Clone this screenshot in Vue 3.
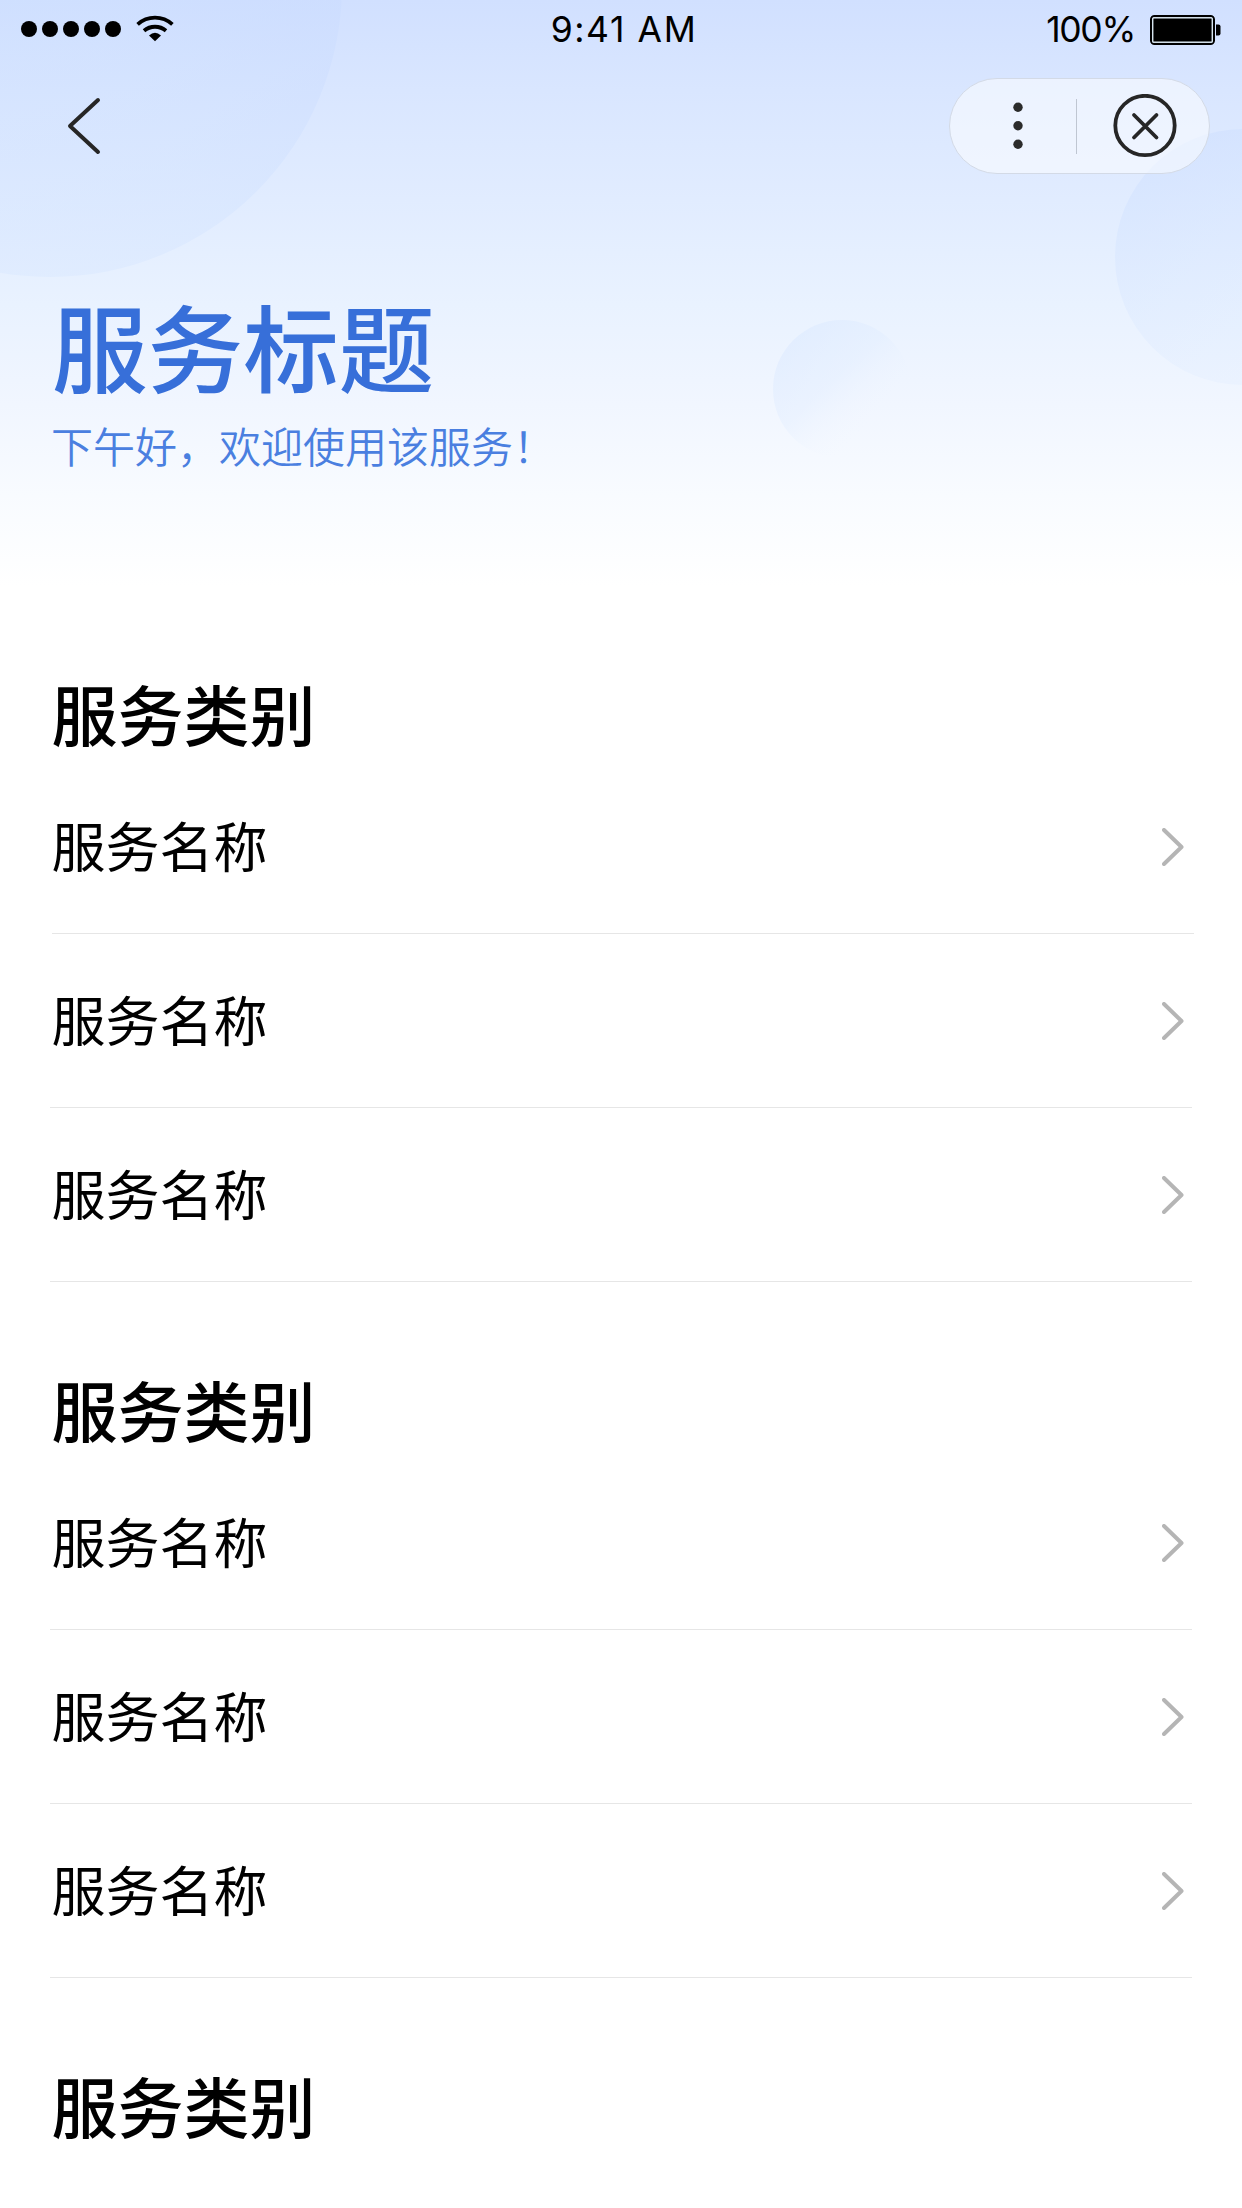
<script setup>
const sections = Array.from({ length: 3 }, (_, id) => ({
  id,
  title: '服务类别',
  items: id < 2 ? ['服务名称', '服务名称', '服务名称'] : [],
}))
</script>

<template>
  <div class="page">
    <header class="hero">
      <svg class="bubbles" viewBox="0 0 1242 600" aria-hidden="true">
        <defs>
          <linearGradient id="b1" x1="0.95" y1="0.6" x2="0.45" y2="0.95">
            <stop offset="0" stop-color="#c6d9ff" stop-opacity="0.32" />
            <stop offset="0.5" stop-color="#cadeff" stop-opacity="0.28" />
            <stop offset="1" stop-color="#cbdfff" stop-opacity="0.24" />
          </linearGradient>
          <linearGradient id="b2" x1="0.2" y1="0.1" x2="0.55" y2="0.9">
            <stop offset="0" stop-color="#c6daff" stop-opacity="0.34" />
            <stop offset="1" stop-color="#d9e8ff" stop-opacity="0.22" />
          </linearGradient>
          <linearGradient id="b3" x1="0.15" y1="0.1" x2="0.75" y2="0.75">
            <stop offset="0" stop-color="#d3e4ff" stop-opacity="0.38" />
            <stop offset="0.5" stop-color="#dceaff" stop-opacity="0.32" />
            <stop offset="1" stop-color="#f4f8ff" stop-opacity="0" />
          </linearGradient>
        </defs>
        <circle cx="50" cy="-15" r="292" fill="url(#b1)" />
        <circle cx="1243" cy="257" r="128" fill="url(#b2)" />
        <circle cx="842" cy="389" r="69" fill="url(#b3)" />
      </svg>

      <div class="status">
        <div class="side">
          <svg width="160" height="30" viewBox="0 0 160 30">
            <circle v-for="n in 5" :key="n" :cx="8 + (n - 1) * 21" cy="14" r="8" />
            <g fill="none" stroke="#000" stroke-width="3.8">
              <path d="M116.6 9.4A26 26 0 0 1 151.4 9.4" />
              <path d="M123 15.8A17 17 0 0 1 145 15.8" />
            </g>
            <path d="M128 20.4Q134 15.3 140 20.4L134 26.3Z" />
          </svg>
        </div>
        <div class="time">9:41 AM</div>
        <div class="side end">
          <span class="percent">100%</span>
          <svg width="71" height="30" viewBox="0 0 71 30">
            <rect x="1" y="1" width="63" height="28" rx="3.5" fill="none" stroke="#000" stroke-width="2" />
            <rect x="2.8" y="2.8" width="59.4" height="24.4" rx="1" fill="#000" stroke="#e2f0f8" stroke-width="1.2" />
            <path d="M66 9.5h2.5q2 0 2 2v7q0 2-2 2H66z" />
          </svg>
        </div>
      </div>

      <nav class="nav">
        <svg width="34" height="58" viewBox="0 0 34 58" class="back">
          <path d="M31 3L3 29L31 55" />
        </svg>
        <div class="capsule">
          <svg class="more" width="10" height="48" viewBox="0 0 10 48">
            <circle cx="5" cy="5.2" r="4.7" />
            <circle cx="5" cy="23.8" r="4.7" />
            <circle cx="5" cy="42.3" r="4.7" />
          </svg>
          <i class="split"></i>
          <svg class="close" width="64" height="64" viewBox="0 0 64 64">
            <circle cx="32" cy="31.5" r="29.7" />
            <path d="M21 21L43.5 43.5M43.5 21L21 43.5" />
          </svg>
        </div>
      </nav>

      <h1>服务标题</h1>
      <p class="greet">下午好，欢迎使用该服务！</p>
    </header>

    <section v-for="s in sections" :key="s.id">
      <h2>{{ s.title }}</h2>
      <ul>
        <li v-for="(name, i) in s.items" :key="i" :class="{ lead: s.id === 0 && i === 0 }">
          <span>{{ name }}</span>
          <svg width="22" height="38" viewBox="0 0 22 38">
            <path d="M2 2L19.5 19L2 36" />
          </svg>
        </li>
      </ul>
    </section>
  </div>
</template>

<style>
body {
  margin: 0;
  background: #fff;
}
</style>

<style scoped>
.page {
  width: 1242px;
  height: 2208px;
  overflow: hidden;
  color: #000;
  font-family: 'Noto Sans CJK SC', sans-serif;
  background: #fff;
}
.hero {
  position: relative;
  height: 586px;
  background: linear-gradient(#d1e0ff 0, #d9e6ff 90px, #e1ecff 200px, #e9f2ff 305px, #f1f6ff 405px, #f8fbff 495px, #fff 586px);
}
.bubbles {
  position: absolute;
  top: 0;
  left: 0;
  width: 1242px;
  height: 600px;
}
.status,
.nav,
h1,
.greet {
  position: relative;
}
.status {
  display: flex;
  align-items: center;
  height: 60px;
  padding: 0 21px;
  font-family: Inter, sans-serif;
}
.side {
  flex: 1;
  display: flex;
  align-items: center;
  height: 60px;
}
.side svg {
  display: block;
}
.end {
  justify-content: flex-end;
  gap: 15px;
}
.time {
  padding: 0 0 1px 6px;
  font-size: 35.5px;
  letter-spacing: 1.6px;
}
.percent {
  padding-bottom: 1px;
  font-size: 35.5px;
  letter-spacing: -1.3px;
}
.nav {
  display: flex;
  align-items: center;
  justify-content: space-between;
  height: 96px;
  margin-top: 18px;
  padding: 0 32px 0 67px;
}
.back {
  fill: none;
  stroke: #262626;
  stroke-width: 4;
  stroke-linecap: round;
  stroke-linejoin: round;
}
.capsule {
  display: flex;
  align-items: center;
  box-sizing: border-box;
  width: 261px;
  height: 96px;
  padding-left: 63px;
  border: 1px solid #d3dae6;
  border-radius: 48px;
  background: rgba(255, 255, 255, 0.5);
}
.more {
  fill: #2b2b2b;
}
.split {
  width: 1px;
  height: 55px;
  margin: 0 36px 0 53px;
  background: #bfc6d2;
}
.close {
  fill: none;
  stroke: #262626;
  stroke-width: 3.8;
  stroke-linecap: round;
}
h1 {
  margin: 111px 0 0 52px;
  color: #376fd9;
  font-size: 95.6px;
  font-weight: 500;
  line-height: 120px;
}
.greet {
  margin: 12px 0 0 51px;
  color: #4a7fe0;
  font-family: 'Noto Sans CJK SC DemiLight', 'Noto Sans CJK SC', sans-serif;
  font-size: 42px;
  font-weight: 350;
  line-height: 56px;
}
section {
  padding: 81px 50px 0 50px;
}
h2 {
  margin: 0 0 3px 1.5px;
  font-size: 66px;
  font-weight: 500;
  line-height: 90px;
}
ul {
  margin: 0;
  padding: 0;
  list-style: none;
}
li {
  display: flex;
  align-items: center;
  justify-content: space-between;
  box-sizing: border-box;
  height: 174px;
  padding: 0 8.5px 0 1.5px;
  border-bottom: 1px solid #e6e6e6;
  font-size: 54px;
}
li span {
  padding-bottom: 4px;
}
.lead {
  margin: 0 -2px 0 2px;
  padding: 0 10.5px 0 0;
}
.lead span {
  margin-left: -0.5px;
}
li svg {
  fill: none;
  stroke: #b5b5b5;
  stroke-width: 4;
  stroke-linecap: round;
  stroke-linejoin: round;
}
</style>
